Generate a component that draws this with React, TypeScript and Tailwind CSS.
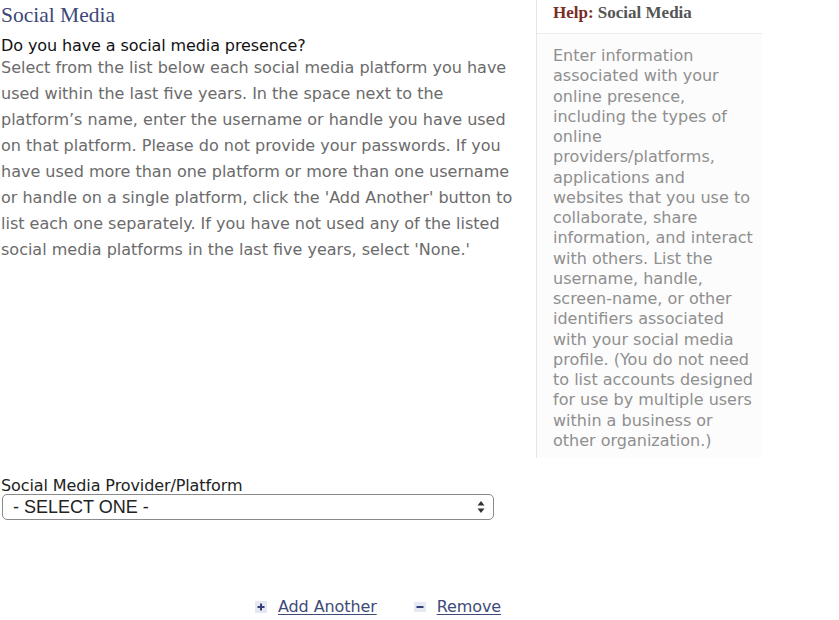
import React from "react";

export default function App() {
  return (
    <div className="w-[839px] h-[620px] bg-white overflow-hidden flex">
      <div className="w-[536px] shrink-0 flex flex-col pl-[1px]">
        <h1 className="mt-[2px] text-[21.5px] leading-[26px] text-[#3d4877] font-['Liberation_Serif',serif]">Social Media</h1>
        <p className="mt-[5px] text-[16px] leading-[26px] text-[#111] font-['DejaVu_Sans',sans-serif] tracking-[-0.1px]">
          Do you have a social media presence?
        </p>
        <p className="-mt-[4px] w-[512px] text-[16px] leading-[26px] text-[#6b6b6b] font-['DejaVu_Sans',sans-serif]">
          Select from the list below each social media platform you have used within the last five years. In the space next to the platform’s name, enter the username or handle you have used on that platform. Please do not provide your passwords. If you have used more than one platform or more than one username or handle on a single platform, click the 'Add Another' button to list each one separately. If you have not used any of the listed social media platforms in the last five years, select 'None.'
        </p>
        <label className="mt-[214px] text-[16px] leading-[18px] text-[#222] font-['DejaVu_Sans',sans-serif] tracking-[-0.1px]">
          Social Media Provider/Platform
        </label>
        <div className="-mt-[1px] ml-[1px] w-[492px] h-[26px] border border-[#8a8a8a] rounded-[5px] flex items-center justify-between pl-[10px] pr-[10px] font-['Liberation_Sans',sans-serif] text-[18px] text-[#222]">
          <span>- SELECT ONE -</span>
          <svg width="8" height="14" viewBox="0 0 8 14" className="mr-[-2px]">
            <path d="M4 1 L7.5 5.5 L0.5 5.5 Z" fill="#333" />
            <path d="M4 13 L7.5 8.5 L0.5 8.5 Z" fill="#333" />
          </svg>
        </div>
        <div className="mt-[75px] flex items-center gap-[37px] pl-[254px] text-[16px] font-['DejaVu_Sans',sans-serif] tracking-[-0.1px]">
          <div className="flex items-center gap-[11px]">
            <svg width="12" height="12" viewBox="0 0 12 12">
              <rect x="0" y="0" width="12" height="12" fill="#e6e9f1" />
              <path d="M6 2.5 V9.5 M2.5 6 H9.5" stroke="#34407a" strokeWidth="2" />
            </svg>
            <a className="text-[#404a78] underline underline-offset-2 decoration-[1px]">Add Another</a>
          </div>
          <div className="flex items-center gap-[11px]">
            <svg width="12" height="10" viewBox="0 0 12 10">
              <rect x="0" y="0" width="12" height="10" fill="#e6e9f1" />
              <path d="M2.5 5 H9.5" stroke="#34407a" strokeWidth="2" />
            </svg>
            <a className="text-[#404a78] underline underline-offset-2 decoration-[1px]">Remove</a>
          </div>
        </div>
      </div>
      <div className="w-[226px] shrink-0 h-[458px] border-l border-[#e6e6e6] flex flex-col">
        <div className="h-[34px] border-b border-[#ececec] pl-[16px] pt-[3px] font-['Liberation_Serif',serif] font-bold text-[17px] leading-[20px]">
          <span className="text-[#7b2b26]">Help:</span> <span className="text-[#555]">Social Media</span>
        </div>
        <div className="flex-1 bg-[#fcfcfc] pl-[16px] pt-[12px]">
          <p className="w-[205px] text-[16px] leading-[20.25px] text-[#8f8f8f] font-['DejaVu_Sans',sans-serif]">
            Enter information associated with your online presence, including the types of online providers/platforms, applications and websites that you use to collaborate, share information, and interact with others. List the username, handle, screen‑name, or other identifiers associated with your social media profile. (You do not need to list accounts designed for use by multiple users within a business or other organization.)
          </p>
        </div>
      </div>
    </div>
  );
}
